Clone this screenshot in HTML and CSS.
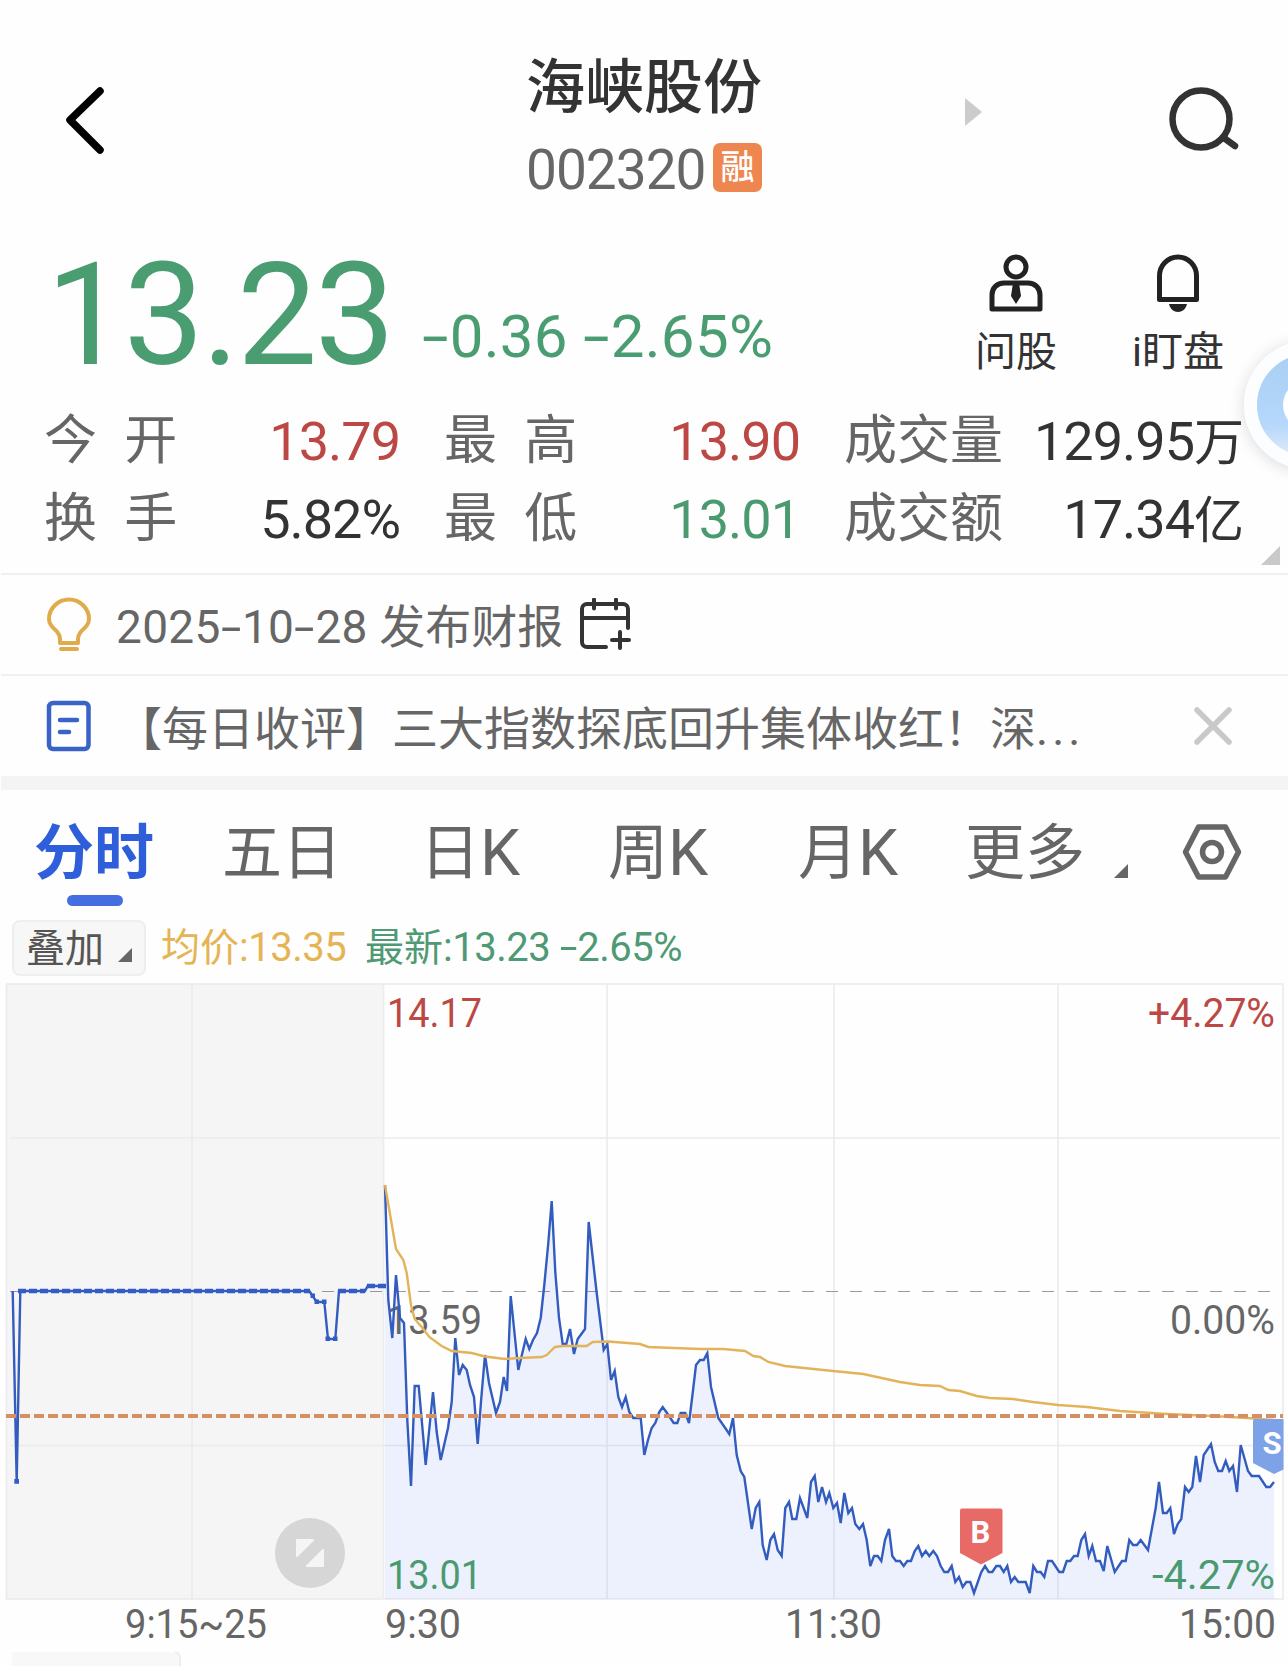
FILE: index.html
```
<!DOCTYPE html>
<html lang="zh-CN">
<head>
	<meta charset="utf-8">
	<title>海峡股份 002320</title>
	<link rel="stylesheet" href="styles.css">
</head>
<body>
	<div class="header">
		<svg class="back" width="44" height="76" viewBox="0 0 44 76"><path d="M37 9L7 38l30 30"/></svg>
		<div class="title">
			<h1>海峡股份</h1>
			<div class="code"><span>002320</span><em>融</em></div>
		</div>
		<div class="header-right">
			<svg class="next" width="18" height="30" viewBox="0 0 18 30"><path d="M0 1v28l17-14z"/></svg>
			<svg class="search" width="76" height="70" viewBox="0 0 76 70"><circle cx="35" cy="34" r="28.5"/><path d="M58 53l11 8"/></svg>
		</div>
	</div>

	<div class="quote">
		<div class="price">13.23</div>
		<div class="change"><s>-</s>0.36 <s>-</s>2.65%</div>
		<div class="tools">
			<div class="tool">
				<svg width="60" height="60" viewBox="0 0 60 60">
					<circle cx="30" cy="14" r="10"/>
					<path d="M6 56V42c0-7 5-12 12-12h24c7 0 12 5 12 12v14z"/>
					<path class="solid" d="M27 30h6l2 13-5 8-5-8z"/>
				</svg>
				<p>问股</p>
			</div>
			<div class="tool">
				<svg width="60" height="60" viewBox="0 0 60 60">
					<path d="M11.500 46.500V23a18.500 19 0 0 1 37 0v23.500z"/>
					<path class="solid" d="M21 51h18c-1 5-5 8-9 8s-8-3-9-8z"/>
				</svg>
				<p>i盯盘</p>
			</div>
		</div>
	</div>

	<div class="stats">
		<div class="stat"><label>今 开</label><b class="red">13.79</b></div>
		<div class="stat"><label>最 高</label><b class="red">13.90</b></div>
		<div class="stat"><label>成交量</label><b>129.95<i>万</i></b></div>
		<div class="stat"><label>换 手</label><b>5.82%</b></div>
		<div class="stat"><label>最 低</label><b class="green">13.01</b></div>
		<div class="stat"><label>成交额</label><b>17.34<i>亿</i></b></div>
		<svg class="corner" width="20" height="20" viewBox="0 0 20 20"><path d="M19 0v19H0z"/></svg>
	</div>

	<div class="notice">
		<svg class="bulb" width="46" height="56" viewBox="0 0 46 56">
			<path d="M14 46v-4c0-3-1-5-3-7.500C6 30 3 27 3 22a20 19.500 0 0 1 40 0c0 5-3 8-8 12.500-2 2.500-3 4.500-3 7.500v4z"/>
			<path d="M15 52h16"/>
		</svg>
		<p><span class="date">2025<s>-</s>10<s>-</s>28</span> 发布财报</p>
		<svg class="calendar" width="52" height="54" viewBox="0 0 52 54">
			<path d="M26 49H7a5 5 0 0 1-5-5V11a5 5 0 0 1 5-5h36a5 5 0 0 1 5 5v19M2 20h46M14 1.500v9M36 1.500v9M40 34v16M32 42h17"/>
		</svg>
	</div>
	<div class="notice news">
		<svg class="doc" width="46" height="52" viewBox="0 0 46 52"><rect x="3" y="3" width="39.500" height="46" rx="4"/><path d="M14 20h17M14 32h9"/></svg>
		<p>【每日收评】三大指数探底回升集体收红！深<span class="dots">...</span></p>
		<svg class="close" width="42" height="42" viewBox="0 0 42 42"><path d="M5 5l32 32M37 5L5 37"/></svg>
	</div>
	<div class="band"></div>

	<div class="tabs">
		<div class="tab active">分时</div>
		<div class="tab">五日</div>
		<div class="tab">日<span>K</span></div>
		<div class="tab">周<span>K</span></div>
		<div class="tab">月<span>K</span></div>
		<div class="tab">更多<svg class="more" width="16" height="16" viewBox="0 0 16 16"><path d="M15 1v14H1z"/></svg></div>
		<svg class="setting" width="60" height="60" viewBox="0 0 60 60"><path d="M16.500 5h27L56.500 30 43.500 55h-27L3.500 30z"/><circle cx="30" cy="30" r="9.500"/></svg>
	</div>

	<div class="legend">
		<div class="overlay-btn">叠加<svg width="16" height="16" viewBox="0 0 16 16"><path d="M15 1v14H1z"/></svg></div>
		<div class="avg">均价<span>:13.35</span></div>
		<div class="latest">最新<span>:13.23 <s>-</s>2.65%</span></div>
	</div>

	<svg class="chart" width="1288" height="686" viewBox="0 980 1288 686">
		<!-- 集合竞价区域 -->
		<rect x="6" y="984" width="377" height="615" fill="#f5f5f5"/>
		<!-- 网格 -->
		<g class="grid">
			<rect x="6.500" y="984" width="1276.500" height="615"/>
			<path d="M192 984v615M383.500 984v615M607 984v615M834 984v615M1058 984v615M10 1138h1270M10 1445.500h1270"/>
		</g>
		<path class="zero" d="M10 1291.500h1264"/>
		<text x="387" y="1333.500" textLength="95" lengthAdjust="spacingAndGlyphs">13.59</text>
		<!-- 分时线 -->
		<path class="area" d="M385 1599V1185L388.300 1300 392.300 1338 396 1275 400 1318 404 1323 407.300 1420 411 1486 414.700 1386 418.700 1386 425.700 1465 433 1392 436.700 1432 440.700 1460 448 1428 451.700 1402 455.300 1338 459 1375 462.700 1365 466.700 1370 470 1385 474 1397 477.700 1444 481.300 1398 485 1355 489 1383 496 1413 500 1402 503.700 1377 507 1391 510.700 1296 518.300 1370 525.700 1339 529.300 1349 533 1340 537 1333 540.700 1318 544.300 1285 548.300 1243 551.700 1201 555.300 1272 559 1318 562.700 1344 566.300 1344 570 1329 574 1354 577.700 1339 585 1329 588.700 1222 596.700 1293 603.700 1350 607.300 1344 611 1380 614.700 1371 618.300 1397 622 1407 625.700 1397 629.300 1412 633.300 1418 640.700 1418 644.300 1455 648 1440 651.700 1428 655.300 1423 659.300 1412 662.700 1407 666.300 1412 673.700 1423 677.300 1423 680.700 1413 685.300 1413 689 1423 692.700 1393 696 1365 700 1360 703.700 1360 707.300 1353 711 1387 718.300 1418 729.300 1434 733 1418 736.700 1455 740.700 1471 744.300 1477 751.700 1529 755.700 1508 759.300 1502 762.700 1545 766.700 1560 770.300 1540 774 1534 777.700 1550 781.700 1556 785.300 1508 789 1502 792.300 1519 796.300 1519 800 1498 807.300 1518 811 1482 814.700 1476 818.300 1502 822 1487 826 1502 829.300 1493 833.300 1508 837 1503 840.700 1523 844.300 1493 848.300 1513 852 1508 855.300 1524 859.300 1529 863 1524 866.700 1540 870.300 1566 874 1556 877.700 1556 881.300 1561 885 1540 889 1529 892.300 1556 896 1561 900 1561 903.700 1566 907.300 1561 911 1561 914.700 1551 918.300 1546 922 1556 925.700 1551 929.300 1556 933.300 1551 937 1556 940.700 1566 944.300 1572 948 1572 951.700 1566 955.300 1582 959 1577 962.700 1587 966.300 1582 970.300 1582 974 1593 981.300 1572 985 1566 988.700 1572 992.300 1572 996.300 1566 1000 1566 1003.700 1572 1007.300 1566 1011 1582 1014.700 1577 1018.300 1582 1025.700 1582 1029.700 1593 1033.300 1566 1037 1572 1040.700 1572 1044.300 1577 1048 1561 1052 1561 1059.300 1572 1063 1572 1066.700 1561 1070.300 1561 1074 1556 1077.700 1556 1081.300 1540 1085 1534 1088.700 1556 1092.300 1546 1096 1561 1100 1561 1103.700 1571 1107.300 1546 1114.700 1572 1122 1561 1125.700 1561 1129.300 1540 1133 1545 1137 1545 1140.700 1540 1148 1550 1155.700 1508 1159 1482 1163 1513 1166.700 1513 1170.300 1508 1174 1534 1177.700 1524 1181.300 1519 1185 1487 1188.700 1492 1192.300 1487 1196 1456 1200 1482 1203.700 1455 1211 1444 1214.700 1462 1218.300 1471 1222 1471 1225.700 1461 1229.300 1471 1233 1466 1237 1492 1240.700 1445 1248 1471 1251.700 1476 1259 1476 1266.300 1487 1270 1487 1274 1482V1599z"/>
		<path class="line" d="M385 1185L388.300 1300 392.300 1338 396 1275 400 1318 404 1323 407.300 1420 411 1486 414.700 1386 418.700 1386 425.700 1465 433 1392 436.700 1432 440.700 1460 448 1428 451.700 1402 455.300 1338 459 1375 462.700 1365 466.700 1370 470 1385 474 1397 477.700 1444 481.300 1398 485 1355 489 1383 496 1413 500 1402 503.700 1377 507 1391 510.700 1296 518.300 1370 525.700 1339 529.300 1349 533 1340 537 1333 540.700 1318 544.300 1285 548.300 1243 551.700 1201 555.300 1272 559 1318 562.700 1344 566.300 1344 570 1329 574 1354 577.700 1339 585 1329 588.700 1222 596.700 1293 603.700 1350 607.300 1344 611 1380 614.700 1371 618.300 1397 622 1407 625.700 1397 629.300 1412 633.300 1418 640.700 1418 644.300 1455 648 1440 651.700 1428 655.300 1423 659.300 1412 662.700 1407 666.300 1412 673.700 1423 677.300 1423 680.700 1413 685.300 1413 689 1423 692.700 1393 696 1365 700 1360 703.700 1360 707.300 1353 711 1387 718.300 1418 729.300 1434 733 1418 736.700 1455 740.700 1471 744.300 1477 751.700 1529 755.700 1508 759.300 1502 762.700 1545 766.700 1560 770.300 1540 774 1534 777.700 1550 781.700 1556 785.300 1508 789 1502 792.300 1519 796.300 1519 800 1498 807.300 1518 811 1482 814.700 1476 818.300 1502 822 1487 826 1502 829.300 1493 833.300 1508 837 1503 840.700 1523 844.300 1493 848.300 1513 852 1508 855.300 1524 859.300 1529 863 1524 866.700 1540 870.300 1566 874 1556 877.700 1556 881.300 1561 885 1540 889 1529 892.300 1556 896 1561 900 1561 903.700 1566 907.300 1561 911 1561 914.700 1551 918.300 1546 922 1556 925.700 1551 929.300 1556 933.300 1551 937 1556 940.700 1566 944.300 1572 948 1572 951.700 1566 955.300 1582 959 1577 962.700 1587 966.300 1582 970.300 1582 974 1593 981.300 1572 985 1566 988.700 1572 992.300 1572 996.300 1566 1000 1566 1003.700 1572 1007.300 1566 1011 1582 1014.700 1577 1018.300 1582 1025.700 1582 1029.700 1593 1033.300 1566 1037 1572 1040.700 1572 1044.300 1577 1048 1561 1052 1561 1059.300 1572 1063 1572 1066.700 1561 1070.300 1561 1074 1556 1077.700 1556 1081.300 1540 1085 1534 1088.700 1556 1092.300 1546 1096 1561 1100 1561 1103.700 1571 1107.300 1546 1114.700 1572 1122 1561 1125.700 1561 1129.300 1540 1133 1545 1137 1545 1140.700 1540 1148 1550 1155.700 1508 1159 1482 1163 1513 1166.700 1513 1170.300 1508 1174 1534 1177.700 1524 1181.300 1519 1185 1487 1188.700 1492 1192.300 1487 1196 1456 1200 1482 1203.700 1455 1211 1444 1214.700 1462 1218.300 1471 1222 1471 1225.700 1461 1229.300 1471 1233 1466 1237 1492 1240.700 1445 1248 1471 1251.700 1476 1259 1476 1266.300 1487 1270 1487 1274 1482"/>
		<!-- 竞价线 -->
		<path class="line" d="M12.700 1291L16.700 1482 20.300 1291H309.300L312.700 1296 316.700 1302H324.300L328 1339H335.300L339 1291H365L367.700 1286H386"/>
		<path class="dot" d="M18 1291H310M338 1291H365M367 1286H386"/>
		<path class="square" d="M14.300 1479h4.700v4.700h-4.700zM310.500 1293.500h4.500v4.500h-4.500zM314.500 1299.500h4.500v4.500h-4.500zM322 1299.500h4.500v4.500h-4.500zM325.500 1336.500h4.500v4.500h-4.500zM333 1336.500h4.500v4.500h-4.500z"/>
		<!-- 均价线 -->
		<path class="avg-line" d="M385 1185L396 1249 403.300 1260 406.700 1273 411 1305 414.700 1319 421.700 1327 429.300 1337 441.700 1346 451.700 1351 471.700 1353 485 1356.500 505 1359 520 1358 541.700 1357 546.700 1355 555 1347 563 1346 586.700 1346 592.700 1342 608.300 1341.500 640 1344 648.300 1347 700 1349 723.300 1349 745 1351 753.300 1356 760 1357 768.300 1362 785 1366 833 1371 863.300 1374 900 1382 920 1385 940 1386 948.300 1390 960 1391 976.700 1396 990 1398 1013 1399 1033 1402 1058 1405 1087 1407 1120 1411 1167 1414 1213 1416 1247 1418 1274 1420"/>
		<path class="cost" d="M6 1416h1277"/>
		<!-- 买卖点 -->
		<path d="M962 1508.500h38.500a2 2 0 0 1 2 2V1553L981 1564.500 960 1553v-42.500a2 2 0 0 1 2-2z" fill="#e76a66"/>
		<text class="mark" x="970.500" y="1543">B</text>
		<path d="M1255 1419H1283.500V1469.500L1274 1474 1253 1463v-42a2 2 0 0 1 2-2z" fill="#7ea2e8"/>
		<text class="mark" x="1262.500" y="1454">S</text>
		<!-- 全屏按钮 -->
		<circle cx="310" cy="1553" r="35" fill="#d6d6d6"/>
		<path d="M297 1540h16l-16 16zM323 1550v16h-16z" fill="#f5f5f5" stroke="#f5f5f5" stroke-width="2" stroke-linejoin="round"/>
		<!-- 坐标 -->
		<text class="red" x="387" y="1027" textLength="95" lengthAdjust="spacingAndGlyphs">14.17</text>
		<text class="red" x="1148" y="1027" textLength="127" lengthAdjust="spacingAndGlyphs">+4.27%</text>
		<text x="1170" y="1333.500" textLength="105" lengthAdjust="spacingAndGlyphs">0.00%</text>
		<text class="green" x="387" y="1588.500" textLength="95" lengthAdjust="spacingAndGlyphs">13.01</text>
		<text class="green" x="1152" y="1588.500" textLength="123" lengthAdjust="spacingAndGlyphs">-4.27%</text>
		<text x="125" y="1638" textLength="142" lengthAdjust="spacingAndGlyphs">9:15~25</text>
		<text x="385" y="1638" textLength="76" lengthAdjust="spacingAndGlyphs">9:30</text>
		<text x="785" y="1638" textLength="97" lengthAdjust="spacingAndGlyphs">11:30</text>
		<text x="1179" y="1638" textLength="97" lengthAdjust="spacingAndGlyphs">15:00</text>
		<path d="M12 1652h163a5 5 0 0 1 5 5v9H12z" fill="#f8f8f8"/>
		<path d="M175 1652.500a5 5 0 0 1 5 5v9" fill="none" stroke="#eee" stroke-width="2"/>
	</svg>

	<div class="float-wrap">
		<div class="float-ball"><div></div></div>
	</div>
</body>
</html>
```
FILE: styles.css
```
*{margin:0;padding:0;box-sizing:border-box;}
body{
	position:relative;
	width:1288px;
	height:1666px;
	overflow:hidden;
	background:#fefefe;
	color:#333;
	font-family:Roboto,"Noto Sans CJK SC",sans-serif;
}
svg{display:block;flex:none;}
em,i{font-style:normal;}
/* 加宽的减号 */
s{
	display:inline-block;
	margin:0 .09em;
	text-decoration:none;
	transform:scaleX(1.6);
}
.red{color:#bb4844;fill:#bb4844;}
.green{color:#4a9a70;fill:#4a9a70;}

/* 顶部 */
.header{
	display:grid;
	grid-template-columns:528px 234px 1fr;
	height:230px;
	padding-top:50px;
}
.back{
	margin:32px 0 0 63px;
	fill:none;
	stroke:#000;
	stroke-width:7.500;
	stroke-linecap:round;
	stroke-linejoin:round;
}
.title h1{
	margin:1px -4px 0 -2px;
	font-size:59px;
	font-weight:500;
	line-height:74px;
}
.code{
	display:flex;
	align-items:center;
	height:85px;
}
.code span{
	width:185px;
	padding-top:5px;
	color:#666;
	font-size:55px;
	letter-spacing:-1px;
	text-indent:-2px;
}
.code em{
	width:49px;
	height:49px;
	border-radius:7px;
	background:#ee8650;
	color:#fff;
	font-size:34px;
	font-weight:500;
	line-height:49px;
	text-align:center;
}
.header-right{display:flex;}
.next{margin:47px 0 0 203px;fill:#ccc;}
.search{
	margin:35px 0 0 183px;
	fill:none;
	stroke:#333;
	stroke-width:6.500;
	stroke-linecap:round;
}

/* 报价 */
.quote{
	display:flex;
	height:170px;
	padding-left:46px;
	color:#4a9c71;
	line-height:170px;
}
.price{
	width:376px;
	font-size:143px;
	letter-spacing:-2.500px;
}
.change{
	width:513px;
	padding-top:42px;
	height:170px;
	font-size:60px;
	line-height:130px;
	letter-spacing:.3px;
	white-space:nowrap;
}
.tools{
	display:flex;
	padding-top:23px;
	color:#333;
}
.tool{
	width:162px;
	font-size:41px;
	line-height:50px;
	text-align:center;
}
.tool svg{
	margin:0 auto 14px;
	fill:none;
	stroke:#222;
	stroke-width:5;
	stroke-linejoin:round;
}
.tool svg .solid{fill:#222;stroke:none;}

/* 行情 */
.stats{
	position:relative;
	display:grid;
	grid-template-columns:355px 355px 398px;
	grid-auto-rows:78px;
	column-gap:45px;
	height:173px;
	padding:3px 0 0 45px;
}
.stat{display:flex;justify-content:space-between;}
.stat label{
	margin-left:-1px;
	color:#666;
	font-size:53px;
	line-height:76px;
	word-spacing:14px;
}
.stat b{
	font-size:54px;
	font-weight:400;
	letter-spacing:-1px;
	line-height:78px;
}
.stat i{font-size:50px;}
.corner{
	position:absolute;
	right:7px;
	bottom:7px;
	fill:#c9c9c9;
}

/* 提示 */
.notice{
	display:flex;
	align-items:center;
	height:101px;
	margin-left:1px;
	border-top:2px solid #f0f0f0;
	padding-left:45px;
	color:#666;
	font-size:46px;
}
.notice svg{
	fill:none;
	stroke-width:4;
	stroke-linecap:round;
	stroke-linejoin:round;
}
.notice p{
	margin-left:24px;
	padding-top:4px;
	line-height:60px;
	white-space:nowrap;
}
.date{letter-spacing:.3px;}
.notice .bulb{stroke:#e0ab4b;}
.notice .calendar{
	margin-left:17px;
	stroke:#333;
}
.news{height:102px;}
.news p{width:965px;padding-top:6px;}
.dots{letter-spacing:4px;margin-left:0;}
.news .doc{stroke:#3a63c8;stroke-width:4.500;}
.news .close{margin-left:111px;stroke:#c9c9c9;stroke-width:5.500;}
.band{height:14px;margin-left:1px;background:#f4f4f4;}

/* 周期切换 */
.tabs{
	display:grid;
	grid-template-columns:188px 198px 188px 190px 167px 217px 60px;
	height:130px;
	padding-left:34px;
	color:#666;
	font-size:60px;
	line-height:128px;
}
.tab{position:relative;display:flex;}
.tab span{font-size:64px;}
.active{color:#2f5edb;font-weight:700;}
.active::after{
	content:"";
	position:absolute;
	left:33px;
	top:105px;
	width:56px;
	height:11px;
	border-radius:6px;
	background:#456fe0;
}
.more{margin:73px 0 0 28px;fill:#666;}
.setting{
	margin-top:32px;
	fill:none;
	stroke:#666;
	stroke-width:5.500;
	stroke-linejoin:round;
}

.legend{
	display:flex;
	height:60px;
	padding-left:12px;
	font-size:39px;
	line-height:56px;
}
.legend span{font-size:40px;letter-spacing:-.5px;}
.overlay-btn{
	display:flex;
	width:134px;
	height:56px;
	border:2px solid #eee;
	border-radius:8px;
	padding-left:12px;
	background:#f7f7f7;
	color:#555;
	line-height:54px;
}
.overlay-btn svg{margin:25px 0 0 13px;fill:#666;}
.avg{width:204px;margin-left:15px;color:#e5b455;}
.latest{color:#4f9a74;}

/* 分时图 */
.chart{font-size:40px;}
.chart text{fill:#666;}
.chart text.red{fill:#bb4844;}
.chart text.green{fill:#4a9a70;}
.chart text.mark{fill:#fff;font-size:31px;font-weight:700;}
.grid{fill:none;stroke:#ececee;stroke-width:1.600;}
.zero{stroke:#999;stroke-width:1.200;stroke-dasharray:12 12;}
.area{fill:#3a63f0;fill-opacity:.085;}
.line{fill:none;stroke:#335cbf;stroke-width:2.400;}
.dot{fill:none;stroke:#335cc8;stroke-width:4.500;stroke-dasharray:8 3;}
.square{fill:#335cc8;}
.avg-line{fill:none;stroke:#e3b35a;stroke-width:2.400;}
.cost{stroke:#d68f63;stroke-width:4;stroke-dasharray:10 4;}

/* 悬浮球 */
.float-wrap{
	position:absolute;
	left:1208px;
	top:305px;
	width:80px;
	height:200px;
	overflow:hidden;
}
.float-ball{
	width:128px;
	height:128px;
	margin:36px;
	border:13px solid #fcfdfe;
	border-radius:50%;
	background:linear-gradient(#a9cff3,#b5d8fb 70%,#e3e9f8);
	box-shadow:0 2px 16px rgba(0,0,0,.14);
}
.float-ball div{
	width:50px;
	height:50px;
	margin:26px;
	border-radius:50%;
	background:#fff;
}
```
